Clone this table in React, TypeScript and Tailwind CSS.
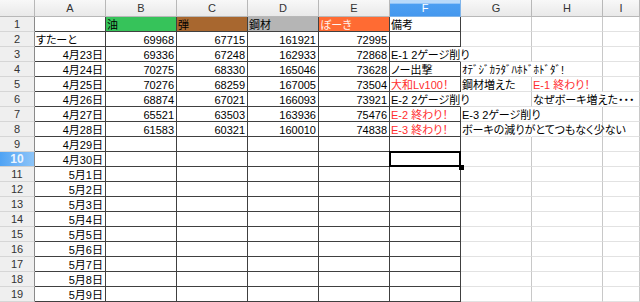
import React from "react";

type Cell = {
    t?: string;
    right?: boolean;
    red?: boolean;
    white?: boolean;
    bg?: string;
    spill?: boolean;
};

const cols = ["A", "B", "C", "D", "E", "F", "G", "H", "I"];

const n = (t: string): Cell => ({ t, right: true });

const rows: Cell[][] = [
    [{}, { t: "油", bg: "bg-[#36c35a]" }, { t: "弾", bg: "bg-[#a8672f]" }, { t: "鋼材", bg: "bg-[#b5b5b5]" }, { t: "ぼーき", bg: "bg-[#ff6b33]", white: true }, { t: "備考" }],
    [{ t: "すたーと" }, n("69968"), n("67715"), n("161921"), n("72995"), {}],
    [n("4月23日"), n("69336"), n("67248"), n("162933"), n("72868"), { t: "E-1 2ゲージ削り", spill: true }],
    [n("4月24日"), n("70275"), n("68330"), n("165046"), n("73628"), { t: "ノー出撃" }, { t: "ｵﾃﾞｼﾞｶﾗﾀﾞﾊﾎﾄﾞﾎﾄﾞﾀﾞ!", spill: true }],
    [n("4月25日"), n("70276"), n("68259"), n("167005"), n("73504"), { t: "大和Lv100！", red: true }, { t: "鋼材増えた" }, { t: "E-1 終わり！", red: true }],
    [n("4月26日"), n("68874"), n("67021"), n("166093"), n("73921"), { t: "E-2 2ゲージ削り", spill: true }, {}, { t: "なぜボーキ増えた・・・", spill: true }],
    [n("4月27日"), n("65521"), n("63503"), n("163936"), n("75476"), { t: "E-2 終わり！", red: true }, { t: "E-3 2ゲージ削り", spill: true }],
    [n("4月28日"), n("61583"), n("60321"), n("160010"), n("74838"), { t: "E-3 終わり！", red: true }, { t: "ボーキの減りがとてつもなく少ない", spill: true }],
    [n("4月29日")],
    [n("4月30日")],
    [n("5月1日")],
    [n("5月2日")],
    [n("5月3日")],
    [n("5月4日")],
    [n("5月5日")],
    [n("5月6日")],
    [n("5月7日")],
    [n("5月8日")],
    [n("5月9日")],
];

function DataCell({ cell, col, row }: { cell: Cell; col: number; row: number }) {
    const boxed = col <= 5;
    const rightLine = cell.spill
        ? "border-r-transparent"
        : boxed
        ? "border-r-[#404040]"
        : "border-r-[#c8c8c8]";
    const bottomLine = boxed ? "border-b-[#404040]" : "border-b-[#e2e2e2]";
    const colour = cell.red ? "text-[#ff2e2e]" : cell.white ? "text-[#fff4ee]" : "text-black";
    const selected = row === 10 && col === 5;

    return (
        <div
            className={`relative flex items-end whitespace-nowrap border-r border-b text-[11px] leading-[12px] ${rightLine} ${bottomLine} ${colour} ${cell.bg ?? ""} ${
                cell.right ? "justify-end pr-[2px]" : "justify-start pl-[1px]"
            }`}
        >
            <span className={cell.spill ? "relative z-10" : ""}>{cell.t}</span>
            {selected && (
                <>
                    <div className="absolute -left-[1px] -top-[1px] w-[72px] h-[16px] border-2 border-black" />
                    <div className="absolute left-[69px] top-[13px] w-[5px] h-[5px] bg-black z-20" />
                </>
            )}
        </div>
    );
}

export default function App() {
    return (
        <div className="w-[640px] h-[302px] overflow-hidden bg-white font-['Liberation_Sans','Noto_Sans_CJK_JP',sans-serif] [font-feature-settings:'palt'] grid grid-cols-[35px_repeat(8,71px)_1fr] grid-rows-[17px_repeat(19,15px)]">
            <div className="bg-linear-to-b from-[#f8f8f8] to-[#e9e9e9] border-r border-b border-[#b8b8b8]" />
            {cols.map((c) =>
                c === "F" ? (
                    <div
                        key={c}
                        className="flex items-center justify-center border-r border-b border-[#7fb4ea] bg-linear-to-b from-[#b9dafa] from-20% via-[#4c9ff2] via-25% to-[#4598ee] text-[11px] text-white"
                    >
                        {c}
                    </div>
                ) : (
                    <div
                        key={c}
                        className="flex items-center justify-center border-r border-b border-[#b8b8b8] bg-linear-to-b from-[#f8f8f8] to-[#e9e9e9] text-[11px] text-[#333]"
                    >
                        {c}
                    </div>
                )
            )}
            {rows.map((r, i) => {
                const row = i + 1;
                return (
                    <React.Fragment key={row}>
                        {row === 10 ? (
                            <div className="flex items-center justify-center border-r border-b border-r-[#8a8a8a] border-b-[#cfcfcf] bg-linear-to-r from-[#4fa3f4] to-[#8cc4f8] text-[12px] font-bold text-[#eaf4ff]">
                                {row}
                            </div>
                        ) : (
                            <div className="flex items-center justify-center border-r border-b border-r-[#8a8a8a] border-b-[#d6d6d6] bg-[#efefef] text-[11px] text-[#333]">
                                {row}
                            </div>
                        )}
                        {cols.map((_, c) => (
                            <DataCell key={c} cell={r[c] ?? {}} col={c} row={row} />
                        ))}
                    </React.Fragment>
                );
            })}
        </div>
    );
}
